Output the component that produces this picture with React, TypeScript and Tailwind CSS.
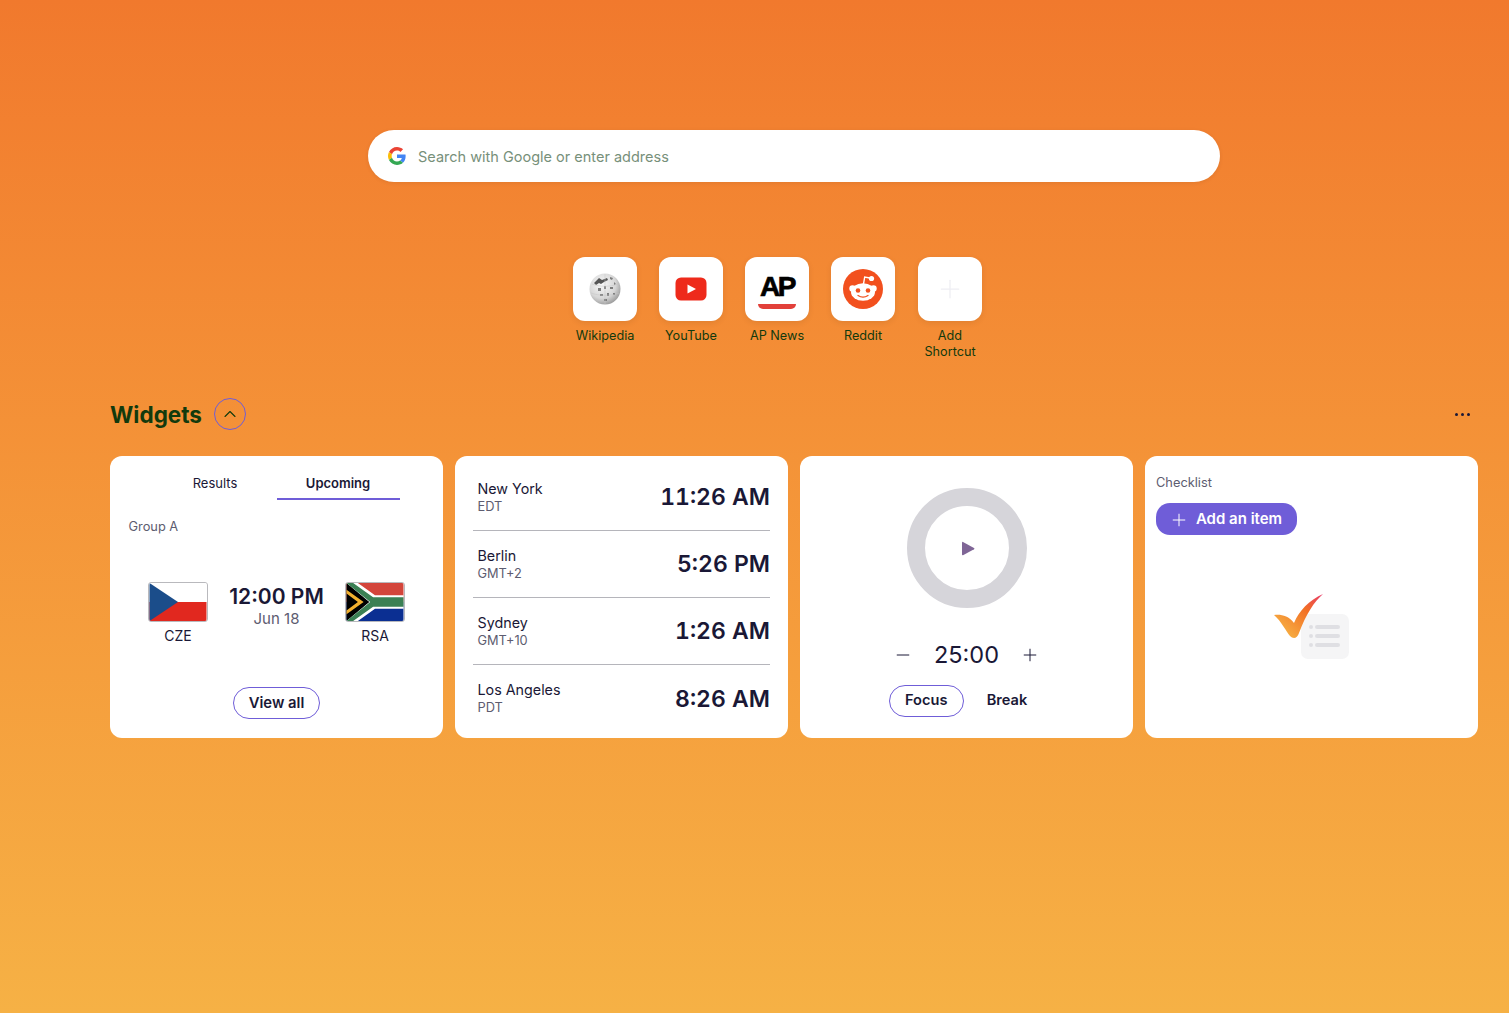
import { ChevronUp, Minus, Plus } from 'lucide-react'
import type { ReactNode } from 'react'

function GoogleIcon() {
  return (
    <svg viewBox="0 0 48 48" className="h-[18px] w-[18px] shrink-0">
      <path fill="#EA4335" d="M24 9.5c3.5 0 6.7 1.2 9.2 3.6l6.9-6.9C35.9 2.4 30.5 0 24 0 14.6 0 6.5 5.4 2.6 13.2l8 6.2C12.5 13.7 17.800 9.500 24 9.500z" />
      <path fill="#4285F4" d="M47 24.500c0-1.600-.1-3.100-.4-4.500H24v9h12.900c-.6 3-2.200 5.500-4.700 7.200l7.700 6c4.500-4.200 7.100-10.300 7.100-17.700z" />
      <path fill="#FBBC05" d="M10.500 28.600c-.5-1.400-.8-3-.8-4.600s.3-3.200.8-4.600l-8-6.200C.9 16.500 0 20.100 0 24s.9 7.500 2.600 10.800l7.900-6.200z" />
      <path fill="#34A853" d="M24 48c6.500 0 11.900-2.100 15.900-5.800l-7.700-6c-2.200 1.500-4.900 2.300-8.200 2.300-6.200 0-11.500-4.200-13.400-9.900l-8 6.200C6.500 42.600 14.600 48 24 48z" />
    </svg>
  )
}

function WikipediaIcon() {
  return (
    <svg viewBox="0 0 32 32" className="h-8 w-8">
      <defs>
        <radialGradient id="globe" cx="0.4" cy="0.35" r="0.75">
          <stop offset="0" stopColor="#f8f8f8" />
          <stop offset="0.6" stopColor="#d6d6d6" />
          <stop offset="1" stopColor="#8a8a8a" />
        </radialGradient>
      </defs>
      <circle cx="16" cy="16" r="15.500" fill="url(#globe)" />
      <path d="M5 10l5-5 3 2 5-2 1 2-4 2-3 2-2-1-3 2z" fill="#555" />
      <path d="M21 4l3 1-1 2-2-1zM25 9l2 2-2 1zM9 15h3v3H9zM15 13h2v3h-2zM21 14h3v2h-3zM11 21h3v2h-3zM18 20h2v3h-2zM24 20h2v2h-2zM15 26h3v2h-3z" fill="#7d7d7d" />
      <path d="M16 1v30M3 11c8 3 18 3 26 0M2 20c8 3 20 3 28 0" stroke="#c4c4c4" strokeWidth="0.5" fill="none" />
    </svg>
  )
}

function YoutubeIcon() {
  return (
    <svg viewBox="0 0 32 24" className="h-[24px] w-[32px]">
      <rect x="0.5" y="0.500" width="31" height="23" rx="5.500" fill="#ee2a1b" />
      <path d="M12.500 7.500l8.500 4.500-8.500 4.500z" fill="#fff" />
    </svg>
  )
}

function ApIcon() {
  return (
    <div className="flex w-[40px] flex-col items-center pt-[8px]">
      <span className="font-['Liberation_Sans',sans-serif] text-[28px] leading-[20px] font-bold tracking-[-2.5px] text-black [-webkit-text-stroke:0.7px_black]">
        AP
      </span>
      <div className="mt-[7px] h-[5px] w-[38px] rounded-b-[5px] bg-[#e2403a]" />
    </div>
  )
}

function RedditIcon() {
  return (
    <svg viewBox="0 0 40 40" className="h-10 w-10">
      <circle cx="20" cy="20" r="20" fill="#f2501e" />
      <path d="M20.500 15l1.200-7 5 1" stroke="#fff" strokeWidth="1.400" fill="none" />
      <circle cx="28.500" cy="9.500" r="2.600" fill="#fff" />
      <circle cx="9.500" cy="19.500" r="3.200" fill="#fff" />
      <circle cx="30.500" cy="19.500" r="3.200" fill="#fff" />
      <ellipse cx="20" cy="23" rx="12" ry="8.800" fill="#fff" />
      <circle cx="15" cy="21.500" r="2.300" fill="#f2501e" />
      <circle cx="25" cy="21.500" r="2.300" fill="#f2501e" />
      <path d="M15 26.500c3 2 7 2 10 0" stroke="#f2501e" strokeWidth="1.300" strokeLinecap="round" fill="none" />
    </svg>
  )
}

function CzechFlag() {
  return (
    <svg viewBox="0 0 60 40" className="h-10 w-[60px] rounded-[3px] border border-[#b9b9bd]">
      <rect width="60" height="20" fill="#fff" />
      <rect y="20" width="60" height="20" fill="#e1281f" />
      <path d="M0 0l30 20L0 40z" fill="#1b4d8a" />
    </svg>
  )
}

function SouthAfricaFlag() {
  return (
    <svg viewBox="0 0 60 40" className="h-10 w-[60px] rounded-[3px] border border-[#b9b9bd]">
      <rect width="60" height="20" fill="#d3453b" />
      <rect y="20" width="60" height="20" fill="#0b2f92" />
      <path d="M0 0l30 20L0 40z" fill="#000" />
      <path d="M0 0h12l18 13h30v14H30L12 40H0l24-20z" fill="#fff" />
      <path d="M0 0h7l21 15h32v10H28L7 40H0l25-20z" fill="#3b8054" />
      <path d="M0 7l18 13L0 33v-4l12-9L0 11z" fill="#f1b02f" />
    </svg>
  )
}

function ChecklistArt() {
  return (
    <svg viewBox="0 0 76 66" className="h-[66px] w-[76px]">
      <defs>
        <linearGradient id="tick" x1="0" y1="1" x2="1" y2="0">
          <stop offset="0" stopColor="#f8c24c" />
          <stop offset="0.65" stopColor="#f26f24" />
          <stop offset="1" stopColor="#e8386a" />
        </linearGradient>
      </defs>
      <rect x="27" y="20" width="48" height="45" rx="7" fill="#f5f5f6" />
      <circle cx="37" cy="33" r="2" fill="#dfdfe3" />
      <circle cx="37" cy="42" r="2" fill="#dfdfe3" />
      <circle cx="37" cy="51" r="2" fill="#dfdfe3" />
      <rect x="41" y="31" width="25" height="4" rx="2" fill="#dfdfe3" />
      <rect x="41" y="40" width="25" height="4" rx="2" fill="#dfdfe3" />
      <rect x="41" y="49" width="25" height="4" rx="2" fill="#dfdfe3" />
      <path d="M0 21c6-1 14 0 20 8 5-12 15-23 29-29-9 8-17 20-24 39-2 6-6 6-9 3C12 37 7 27 0 21z" fill="url(#tick)" />
    </svg>
  )
}

function Shortcut({ label, icon, className }: { label: string; icon?: ReactNode; className?: string }) {
  return (
    <div className={`flex w-[86px] flex-col items-center ${className ?? ''}`}>
      <div className="flex h-16 w-16 items-center justify-center rounded-xl bg-white shadow-[0_2px_6px_rgba(0,0,0,0.08)]">
        {icon}
      </div>
      <span className="mt-[7px] w-[70px] text-center text-[12.7px] leading-4 text-[#123a0d]">{label}</span>
    </div>
  )
}

function Card({ children, className }: { children: ReactNode; className?: string }) {
  return <div className={`h-[282px] rounded-xl bg-white ${className ?? ''}`}>{children}</div>
}

function MatchCard() {
  return (
    <Card className="flex flex-col items-center pt-[16px]">
      <div className="flex w-[246px]">
        <div className="h-[28px] w-[123px] pt-[3px] text-center text-[13px] leading-4 text-[#1a1836]">Results</div>
        <div className="h-[28px] w-[123px] border-b-2 border-[#6f5dd8] pt-[3px] text-center text-[13px] leading-4 font-semibold text-[#1a1836]">
          Upcoming
        </div>
      </div>
      <div className="mt-[19px] w-full pl-[18.500px] text-[12.8px] leading-4 text-[#5d5c70]">Group A</div>
      <div className="mt-[47px] flex w-[257px] items-start justify-between">
        <div className="flex flex-col items-center">
          <CzechFlag />
          <span className="mt-[5px] text-[14px] leading-[17px] text-[#1a1836]">CZE</span>
        </div>
        <div className="flex flex-col items-center pt-[1px]">
          <span className="text-[21px] leading-[27px] font-semibold text-[#1a1836]">12:00 PM</span>
          <span className="text-[15px] leading-[18px] text-[#5d5c70]">Jun 18</span>
        </div>
        <div className="flex flex-col items-center">
          <SouthAfricaFlag />
          <span className="mt-[5px] text-[14px] leading-[17px] text-[#1a1836]">RSA</span>
        </div>
      </div>
      <button className="mt-[43px] h-8 w-[87px] rounded-full border border-[#6f5dd8] text-[14.800px] font-semibold text-[#1a1836]">
        View all
      </button>
    </Card>
  )
}

const clocks = [
  { city: 'New York', zone: 'EDT', time: '11:26 AM' },
  { city: 'Berlin', zone: 'GMT+2', time: '5:26 PM' },
  { city: 'Sydney', zone: 'GMT+10', time: '1:26 AM' },
  { city: 'Los Angeles', zone: 'PDT', time: '8:26 AM' },
]

function ClockCard() {
  return (
    <Card className="px-[18px] pt-[8px]">
      {clocks.map((c, i) => (
        <div
          key={c.city}
          className={`flex h-[67px] items-center justify-between pl-[4.500px] ${i < 3 ? 'border-b border-[#b5b5bb]' : ''}`}
        >
          <div className="flex flex-col">
            <span className="text-[14.300px] leading-[19px] text-[#1a1836]">{c.city}</span>
            <span className="text-[12.800px] leading-[18px] text-[#5d5c70]">{c.zone}</span>
          </div>
          <span className="mt-[1px] text-[23px] font-semibold tabular-nums text-[#1a1836]">{c.time}</span>
        </div>
      ))}
    </Card>
  )
}

function TimerCard() {
  return (
    <Card className="flex flex-col items-center pt-[32px]">
      <div className="flex h-[120px] w-[120px] items-center justify-center rounded-full border-[18px] border-[#d6d5da]">
        <svg viewBox="0 0 14 15" className="ml-[2px] h-[15px] w-[14px]">
          <path d="M1 1.500c0-.5.500-.8 1-.6l11 6c.5.300.5 1 0 1.300l-11 6c-.5.200-1-.1-1-.6z" fill="#7f6596" />
        </svg>
      </div>
      <div className="mt-[31px] flex h-[32px] w-[148px] items-center justify-between text-[#1a1836]">
        <Minus size={20} strokeWidth={1.200} />
        <span className="text-[23.500px] leading-8">25:00</span>
        <Plus size={20} strokeWidth={1.200} />
      </div>
      <div className="mt-[14px] mr-[17px] flex items-center gap-[23px]">
        <button className="h-8 w-[75px] rounded-full border border-[#6f5dd8] text-[14.600px] font-semibold text-[#1a1836]">
          Focus
        </button>
        <span className="text-[14.600px] font-semibold text-[#1a1836]">Break</span>
      </div>
    </Card>
  )
}

function ChecklistCard() {
  return (
    <Card className="flex flex-col px-[11px] pt-[19px]">
      <span className="text-[12.800px] leading-4 text-[#5d5c70]">Checklist</span>
      <button className="mt-[12px] flex h-8 w-[141px] items-center justify-center gap-[7px] rounded-[14px] bg-[#6f5dd8] pt-[1px] pr-[2px] text-[15px] font-semibold text-white">
        <Plus size={20} strokeWidth={1.200} />
        Add an item
      </button>
      <div className="flex flex-1 items-center justify-center pb-[20px]">
        <ChecklistArt />
      </div>
    </Card>
  )
}

export default function App() {
  return (
    <div className="min-h-[1013px] bg-linear-to-b from-[#f1792d] to-[#f6b145] pt-[130px] pr-[31px] pl-[110px] font-[Inter,sans-serif]">
      <div className="mx-auto flex h-[52px] w-[852px] items-center gap-[12px] rounded-full bg-white pl-[20px] shadow-[0_1px_4px_rgba(0,0,0,0.08)]">
        <GoogleIcon />
        <span className="mt-[1px] text-[14.500px] text-[#77907a]">Search with Google or enter address</span>
      </div>

      <div className="mt-[75px] ml-[452px] flex items-start">
        <Shortcut label="Wikipedia" icon={<WikipediaIcon />} />
        <Shortcut label="YouTube" icon={<YoutubeIcon />} />
        <Shortcut label="AP News" icon={<ApIcon />} />
        <Shortcut label="Reddit" icon={<RedditIcon />} />
        <Shortcut
          label="Add Shortcut"
          className="ml-px"
          icon={<Plus size={30} strokeWidth={1} className="text-[#eeeef3]" />}
        />
      </div>

      <div className="mt-[38px] flex h-8 items-center justify-between">
        <div className="flex items-center gap-[12px]">
          <h2 className="mt-[1px] text-[22.500px] font-bold text-[#123a0d]">Widgets</h2>
          <button className="flex h-8 w-8 items-center justify-center rounded-full border border-[#6f5dd8] text-[#123a0d]">
            <ChevronUp size={20} strokeWidth={1.300} />
          </button>
        </div>
        <div className="mr-[8px] flex gap-[3px]">
          <span className="h-[3px] w-[3px] rounded-full bg-[#1a1836]" />
          <span className="h-[3px] w-[3px] rounded-full bg-[#1a1836]" />
          <span className="h-[3px] w-[3px] rounded-full bg-[#1a1836]" />
        </div>
      </div>

      <div className="mt-[26px] grid grid-cols-4 gap-3">
        <MatchCard />
        <ClockCard />
        <TimerCard />
        <ChecklistCard />
      </div>
    </div>
  )
}
